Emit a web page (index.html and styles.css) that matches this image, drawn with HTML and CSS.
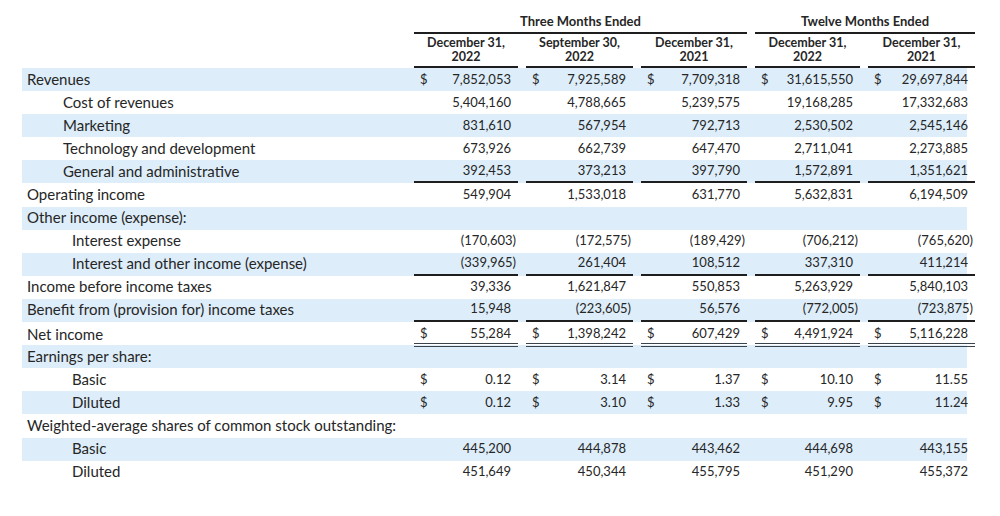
FILE: index.html
```html
<!DOCTYPE html>
<html lang="en">
<head>
<meta charset="utf-8">
<title>Statement of Operations</title>
<link rel="stylesheet" href="styles.css">
</head>
<body>
<div class="sheet">
  <div class="row head-group">
    <div></div>
    <div class="group g3">Three Months Ended</div>
    <div class="group g2">Twelve Months Ended</div>
  </div>
  <div class="row head-cols">
    <div></div>
    <div class="colhead"><span>December 31,</span><span>2022</span></div>
    <div class="colhead"><span>September 30,</span><span>2022</span></div>
    <div class="colhead"><span>December 31,</span><span>2021</span></div>
    <div class="colhead"><span>December 31,</span><span>2022</span></div>
    <div class="colhead"><span>December 31,</span><span>2021</span></div>
  </div>

  <div class="row shade">
    <div class="lbl l0">Revenues</div>
    <div class="c"><span class="d">$</span><span class="v">7,852,053</span></div>
    <div class="c"><span class="d">$</span><span class="v">7,925,589</span></div>
    <div class="c"><span class="d">$</span><span class="v">7,709,318</span></div>
    <div class="c"><span class="d">$</span><span class="v">31,615,550</span></div>
    <div class="c"><span class="d">$</span><span class="v">29,697,844</span></div>
  </div>
  <div class="row">
    <div class="lbl l1">Cost of revenues</div>
    <div class="c"><span class="v">5,404,160</span></div>
    <div class="c"><span class="v">4,788,665</span></div>
    <div class="c"><span class="v">5,239,575</span></div>
    <div class="c"><span class="v">19,168,285</span></div>
    <div class="c"><span class="v">17,332,683</span></div>
  </div>
  <div class="row shade">
    <div class="lbl l1">Marketing</div>
    <div class="c"><span class="v">831,610</span></div>
    <div class="c"><span class="v">567,954</span></div>
    <div class="c"><span class="v">792,713</span></div>
    <div class="c"><span class="v">2,530,502</span></div>
    <div class="c"><span class="v">2,545,146</span></div>
  </div>
  <div class="row">
    <div class="lbl l1">Technology and development</div>
    <div class="c"><span class="v">673,926</span></div>
    <div class="c"><span class="v">662,739</span></div>
    <div class="c"><span class="v">647,470</span></div>
    <div class="c"><span class="v">2,711,041</span></div>
    <div class="c"><span class="v">2,273,885</span></div>
  </div>
  <div class="row shade">
    <div class="lbl l1">General and administrative</div>
    <div class="c line"><span class="v">392,453</span></div>
    <div class="c line"><span class="v">373,213</span></div>
    <div class="c line"><span class="v">397,790</span></div>
    <div class="c line"><span class="v">1,572,891</span></div>
    <div class="c line"><span class="v">1,351,621</span></div>
  </div>
  <div class="row">
    <div class="lbl l0">Operating income</div>
    <div class="c"><span class="v">549,904</span></div>
    <div class="c"><span class="v">1,533,018</span></div>
    <div class="c"><span class="v">631,770</span></div>
    <div class="c"><span class="v">5,632,831</span></div>
    <div class="c"><span class="v">6,194,509</span></div>
  </div>
  <div class="row shade">
    <div class="lbl l0">Other income (expense):</div>
  </div>
  <div class="row">
    <div class="lbl l2">Interest expense</div>
    <div class="c"><span class="v neg">(170,603)</span></div>
    <div class="c"><span class="v neg">(172,575)</span></div>
    <div class="c"><span class="v neg">(189,429)</span></div>
    <div class="c"><span class="v neg">(706,212)</span></div>
    <div class="c"><span class="v neg">(765,620)</span></div>
  </div>
  <div class="row shade">
    <div class="lbl l2">Interest and other income (expense)</div>
    <div class="c line"><span class="v neg">(339,965)</span></div>
    <div class="c line"><span class="v">261,404</span></div>
    <div class="c line"><span class="v">108,512</span></div>
    <div class="c line"><span class="v">337,310</span></div>
    <div class="c line"><span class="v">411,214</span></div>
  </div>
  <div class="row">
    <div class="lbl l0">Income before income taxes</div>
    <div class="c"><span class="v">39,336</span></div>
    <div class="c"><span class="v">1,621,847</span></div>
    <div class="c"><span class="v">550,853</span></div>
    <div class="c"><span class="v">5,263,929</span></div>
    <div class="c"><span class="v">5,840,103</span></div>
  </div>
  <div class="row shade">
    <div class="lbl l0">Benefit from (provision for) income taxes</div>
    <div class="c line"><span class="v">15,948</span></div>
    <div class="c line"><span class="v neg">(223,605)</span></div>
    <div class="c line"><span class="v">56,576</span></div>
    <div class="c line"><span class="v neg">(772,005)</span></div>
    <div class="c line"><span class="v neg">(723,875)</span></div>
  </div>
  <div class="row">
    <div class="lbl l0">Net income</div>
    <div class="c dbl"><span class="d">$</span><span class="v">55,284</span></div>
    <div class="c dbl"><span class="d">$</span><span class="v">1,398,242</span></div>
    <div class="c dbl"><span class="d">$</span><span class="v">607,429</span></div>
    <div class="c dbl"><span class="d">$</span><span class="v">4,491,924</span></div>
    <div class="c dbl"><span class="d">$</span><span class="v">5,116,228</span></div>
  </div>
  <div class="row shade">
    <div class="lbl l0">Earnings per share:</div>
  </div>
  <div class="row">
    <div class="lbl l2">Basic</div>
    <div class="c"><span class="d">$</span><span class="v">0.12</span></div>
    <div class="c"><span class="d">$</span><span class="v">3.14</span></div>
    <div class="c"><span class="d">$</span><span class="v">1.37</span></div>
    <div class="c"><span class="d">$</span><span class="v">10.10</span></div>
    <div class="c"><span class="d">$</span><span class="v">11.55</span></div>
  </div>
  <div class="row shade">
    <div class="lbl l2">Diluted</div>
    <div class="c"><span class="d">$</span><span class="v">0.12</span></div>
    <div class="c"><span class="d">$</span><span class="v">3.10</span></div>
    <div class="c"><span class="d">$</span><span class="v">1.33</span></div>
    <div class="c"><span class="d">$</span><span class="v">9.95</span></div>
    <div class="c"><span class="d">$</span><span class="v">11.24</span></div>
  </div>
  <div class="row">
    <div class="lbl l0 wide">Weighted-average shares of common stock outstanding:</div>
  </div>
  <div class="row shade">
    <div class="lbl l2">Basic</div>
    <div class="c"><span class="v">445,200</span></div>
    <div class="c"><span class="v">444,878</span></div>
    <div class="c"><span class="v">443,462</span></div>
    <div class="c"><span class="v">444,698</span></div>
    <div class="c"><span class="v">443,155</span></div>
  </div>
  <div class="row">
    <div class="lbl l2">Diluted</div>
    <div class="c"><span class="v">451,649</span></div>
    <div class="c"><span class="v">450,344</span></div>
    <div class="c"><span class="v">455,795</span></div>
    <div class="c"><span class="v">451,290</span></div>
    <div class="c"><span class="v">455,372</span></div>
  </div>
</div>
</body>
</html>
```

FILE: styles.css
```css
html, body {
  margin: 0;
  padding: 0;
  background: #ffffff;
}

body {
  font-family: Lato, "Open Sans", "Liberation Sans", sans-serif;
  color: #262626;
  width: 1000px;
  height: 516px;
  overflow: hidden;
}

.sheet {
  padding: 0 0 0 22px;
  width: 945px;
}

.row {
  display: grid;
  grid-template-columns: 384px 104px 107px 106px 105px 107px;
  column-gap: 8px;
  height: 23.1px;
  align-items: stretch;
}

.row.shade {
  background: #ddedf9;
}

.head-group {
  height: 34px;
}

.group {
  font-weight: 700;
  font-size: 13px;
  line-height: 16px;
  text-align: center;
  border-bottom: 2px solid #1e1e1e;
  align-self: end;
  padding-bottom: 3px;
}

.group.g3 {
  grid-column: 2 / 5;
}

.group.g2 {
  grid-column: 5 / 7;
}

.head-cols {
  height: 34px;
}

.colhead {
  display: flex;
  flex-direction: column;
  align-items: center;
  font-weight: 700;
  font-size: 12.5px;
  padding-top: 2px;
  border-bottom: 2px solid #1e1e1e;
  box-sizing: border-box;
}

.colhead span {
  display: block;
  height: 14px;
  line-height: 14px;
}

.lbl {
  font-size: 15px;
  display: flex;
  align-items: center;
  padding-bottom: 2px;
  box-sizing: border-box;
  white-space: nowrap;
}

.lbl.l0 {
  padding-left: 5px;
}

.lbl.l1 {
  padding-left: 41px;
}

.lbl.l2 {
  padding-left: 50px;
}

.lbl.wide {
  grid-column: 1 / 4;
}

.c {
  display: flex;
  align-items: center;
  justify-content: flex-end;
  font-size: 13px;
  padding: 0 7px 2px 6px;
  box-sizing: border-box;
}

.c .d {
  margin-right: auto;
}

.c .v.neg {
  margin-right: -5px;
}

.c.line {
  border-bottom: 2px solid #1e1e1e;
}

.c.dbl {
  border-bottom: 4px double #3c444b;
  padding-top: 3px;
}
```
